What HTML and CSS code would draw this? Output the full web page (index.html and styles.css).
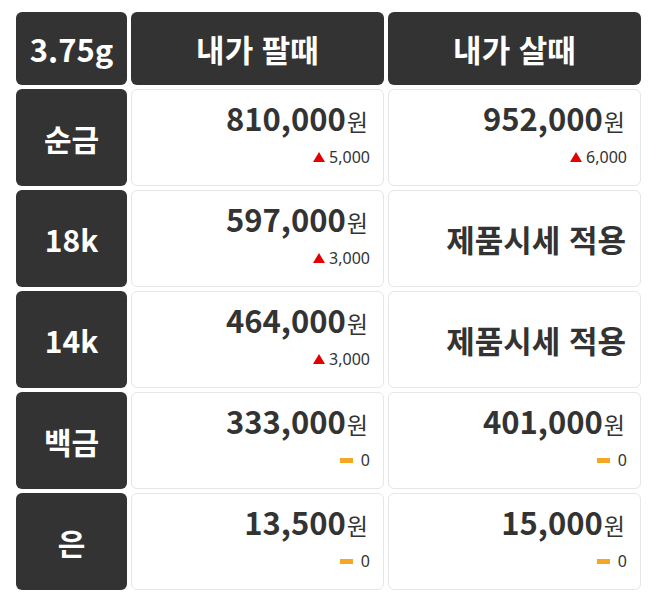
FILE: index.html
```html
<!DOCTYPE html>
<html lang="ko">
<head>
<meta charset="utf-8">
<link rel="stylesheet" href="styles.css">
</head>
<body>
<div class="table">
  <div class="head">3.75g</div>
  <div class="head">내가 팔때</div>
  <div class="head">내가 살때</div>

  <div class="label">순금</div>
  <div class="cell"><div class="price">810,000<span class="won">원</span></div><div class="chg"><span class="up"></span>5,000</div></div>
  <div class="cell"><div class="price">952,000<span class="won">원</span></div><div class="chg"><span class="up"></span>6,000</div></div>

  <div class="label">18k</div>
  <div class="cell"><div class="price">597,000<span class="won">원</span></div><div class="chg"><span class="up"></span>3,000</div></div>
  <div class="cell center"><div class="note">제품시세 적용</div></div>

  <div class="label">14k</div>
  <div class="cell"><div class="price">464,000<span class="won">원</span></div><div class="chg"><span class="up"></span>3,000</div></div>
  <div class="cell center"><div class="note">제품시세 적용</div></div>

  <div class="label">백금</div>
  <div class="cell"><div class="price">333,000<span class="won">원</span></div><div class="chg"><span class="flat"></span>0</div></div>
  <div class="cell"><div class="price">401,000<span class="won">원</span></div><div class="chg"><span class="flat"></span>0</div></div>

  <div class="label">은</div>
  <div class="cell"><div class="price">13,500<span class="won">원</span></div><div class="chg"><span class="flat"></span>0</div></div>
  <div class="cell"><div class="price">15,000<span class="won">원</span></div><div class="chg"><span class="flat"></span>0</div></div>
</div>
</body>
</html>
```
FILE: styles.css
```css
html, body {
  margin: 0;
  padding: 0;
  background: #fff;
}
body {
  padding: 12px 0 0 16px;
  font-family: "Noto Sans CJK KR", "Noto Sans", sans-serif;
}
.table {
  display: grid;
  grid-template-columns: 111px 253px 253px;
  grid-template-rows: 73px repeat(5, 97px);
  gap: 4px;
}
.head, .label {
  background: #333;
  color: #fff;
  border-radius: 6px;
  display: flex;
  align-items: center;
  justify-content: center;
  font-weight: 700;
  font-size: 31px;
}
.label {
  font-size: 30px;
}
.cell {
  border: 1px solid #e6e6e6;
  border-radius: 6px;
  display: flex;
  flex-direction: column;
  align-items: flex-end;
  padding: 8px 13px 0 0;
  color: #333;
}
.cell.center {
  justify-content: center;
  padding: 0 14px 0 0;
}
.price {
  font-size: 31px;
  font-weight: 700;
  line-height: 40px;
  margin-right: 2px;
  display: flex;
  align-items: baseline;
}
.won {
  font-size: 23px;
  font-weight: 400;
  margin-left: 1px;
}
.note {
  font-size: 31px;
  font-weight: 700;
}
.chg {
  display: flex;
  align-items: center;
  font-family: "Noto Sans", sans-serif;
  font-size: 16px;
  line-height: 20px;
  margin-top: 6px;
  color: #333;
}
.up {
  width: 0;
  height: 0;
  border-left: 6px solid transparent;
  border-right: 6px solid transparent;
  border-bottom: 10px solid #e30000;
  margin-right: 4px;
}
.flat {
  width: 13px;
  height: 5px;
  background: #f5a623;
  margin-right: 8px;
}
```
